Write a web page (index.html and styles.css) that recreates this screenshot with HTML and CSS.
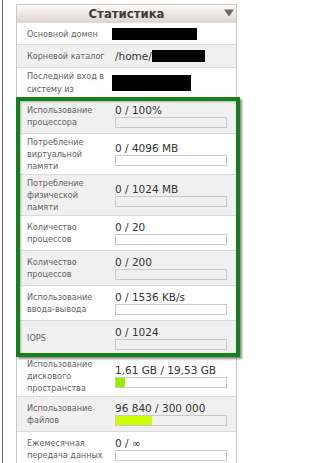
FILE: index.html
```html
<!DOCTYPE html>
<html lang="ru">
<head>
<meta charset="utf-8">
<title>Статистика</title>
<link rel="stylesheet" href="styles.css">
</head>
<body>
<div class="page">
  <section class="panel">
    <header class="head">
      <span class="title">Статистика</span>
      <svg class="toggle" width="10" height="8" viewBox="0 0 10 8"><path d="M0 0.5H10L5 7.5Z" fill="#6a6a6a"/></svg>
    </header>

    <div class="row info">
      <div class="label">Основной домен</div>
      <div class="value"><span class="redact r1"></span></div>
    </div>
    <div class="row info alt tallline">
      <div class="label">Корневой каталог</div>
      <div class="value"><span class="path">/home/</span><span class="redact r2"></span></div>
    </div>
    <div class="row info tall">
      <div class="label">Последний вход в систему из</div>
      <div class="value"><span class="redact r3"></span></div>
    </div>

    <div class="row alt">
      <div class="label">Использование процессора</div>
      <div class="value"><div class="num">0 / 100%</div><div class="bar"></div></div>
    </div>
    <div class="row">
      <div class="label">Потребление виртуальной памяти</div>
      <div class="value"><div class="num">0 / 4096 MB</div><div class="bar"></div></div>
    </div>
    <div class="row alt">
      <div class="label">Потребление физической памяти</div>
      <div class="value"><div class="num">0 / 1024 MB</div><div class="bar"></div></div>
    </div>
    <div class="row">
      <div class="label">Количество процессов</div>
      <div class="value"><div class="num">0 / 20</div><div class="bar"></div></div>
    </div>
    <div class="row alt">
      <div class="label">Количество процессов</div>
      <div class="value"><div class="num">0 / 200</div><div class="bar"></div></div>
    </div>
    <div class="row">
      <div class="label">Использование ввода-вывода</div>
      <div class="value"><div class="num">0 / 1536 KB/s</div><div class="bar"></div></div>
    </div>
    <div class="row alt">
      <div class="label">IOPS</div>
      <div class="value"><div class="num">0 / 1024</div><div class="bar"></div></div>
    </div>
    <div class="row">
      <div class="label">Использование дискового пространства</div>
      <div class="value"><div class="num">1,61 GB / 19,53 GB</div><div class="bar"><div class="fill disk" style="width:8.2%"></div></div></div>
    </div>
    <div class="row alt">
      <div class="label">Использование файлов</div>
      <div class="value"><div class="num">96 840 / 300 000</div><div class="bar"><div class="fill files" style="width:32.3%"></div></div></div>
    </div>
    <div class="row">
      <div class="label">Ежемесячная передача данных</div>
      <div class="value"><div class="num">0 / ∞</div><div class="bar"></div></div>
    </div>
  </section>
  <div class="highlight"></div>
</div>
</body>
</html>
```

FILE: styles.css
```css
html, body {
  margin: 0;
  padding: 0;
  overflow: hidden;
  background: #ffffff;
}

.page {
  position: relative;
  box-sizing: border-box;
  height: 100vh;
  margin-left: 2px;
  border-left: 1px solid #6e6e6e;
  padding: 4px 0 0 13px;
}

.panel {
  width: 221px;
  box-sizing: border-box;
  border: 1px solid #c8c8c8;
  border-bottom: none;
}

.head {
  height: 17px;
  display: grid;
  grid-template-columns: 1fr auto 1fr;
  align-items: center;
  background: linear-gradient(#fbfaf9, #e2d4cd);
}

.title {
  grid-column: 2;
  font: bold 13px/17px "DejaVu Sans Condensed", "Liberation Sans", sans-serif;
  color: #3c3c3c;
}

.toggle {
  grid-column: 3;
  justify-self: end;
  margin-right: 2px;
  margin-top: -2px;
}

.row {
  display: flex;
  align-items: center;
  border-top: 1px solid #dcdcdc;
  padding: 2px 0;
  background: #ffffff;
}

.row.alt {
  background: #f0f0f0;
}

.label {
  flex: 0 0 98px;
  box-sizing: border-box;
  padding: 0 8px 0 10px;
  font: 9px/12px "DejaVu Sans Condensed", "Liberation Sans", sans-serif;
  color: #626262;
}

.tall .label {
  line-height: 13px;
}

.value {
  flex: 1;
  padding-right: 9px;
  font: 10.5px/13px "DejaVu Sans", sans-serif;
  color: #333333;
}

.info .value {
  height: 17px;
  display: flex;
  align-items: center;
}

.info.tallline .value {
  height: 18px;
}

.tall .value {
  height: 26px;
}

.path {
  white-space: nowrap;
}

.redact {
  display: inline-block;
  background: #000000;
}

.r1 {
  width: 85px;
  height: 12px;
  margin-left: -3px;
}

.r2 {
  width: 53px;
  height: 12px;
}

.r3 {
  width: 79px;
  height: 16px;
  margin-left: -3px;
}

.num {
  margin-top: 3px;
  line-height: 13px;
  white-space: nowrap;
}

.bar {
  width: 110px;
  height: 9px;
  border: 1px solid #c9c9c9;
  margin-bottom: 3px;
}

.fill {
  height: 100%;
}

.fill.disk {
  background: #99ee00;
}

.fill.files {
  background: #ccff00;
}

.highlight {
  position: absolute;
  left: 13px;
  top: 97px;
  width: 224px;
  height: 260px;
  box-sizing: border-box;
  border: 4px solid #13801a;
  box-shadow: 2px 2px 2px rgba(0, 0, 0, 0.45), inset 1px 1px 2px rgba(0, 0, 0, 0.25);
  pointer-events: none;
}
```
